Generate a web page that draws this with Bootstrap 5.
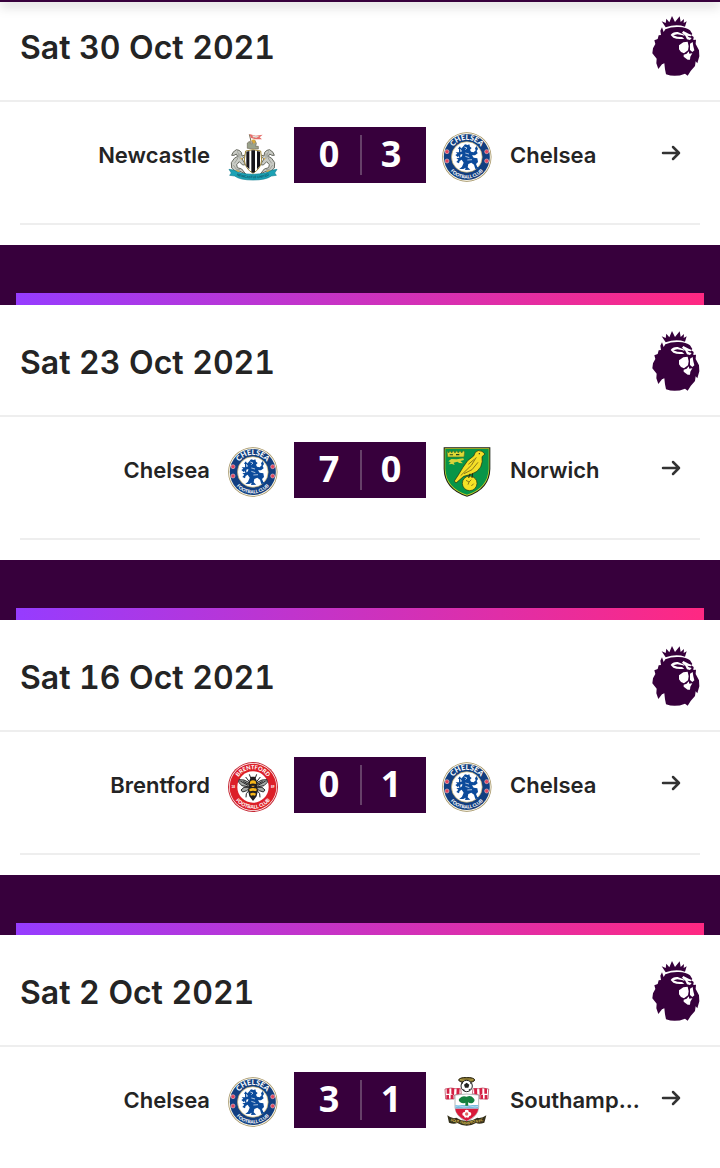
<!DOCTYPE html>
<html lang="en">
<head>
<meta charset="utf-8">
<meta name="viewport" content="width=device-width, initial-scale=1">
<title>Chelsea results, October 2021</title>
<link rel="stylesheet" href="https://cdn.jsdelivr.net/npm/bootstrap@5.3.0/dist/css/bootstrap.min.css">
<style>
:root { --plum: #37003c; --ink: #242424; --rule: #eeeeee; }
body { font-family: Inter, "Noto Sans", sans-serif; color: var(--ink); background: #fff; }
.top-strip { height: 2px; background: var(--plum); box-shadow: 0 2px 12px rgba(0,0,0,.6); }
.day-first { margin-top: -12px; }
.day-head { padding: 26px 20px 24px; border-bottom: 2px solid var(--rule); }
.day-title { font-size: 32px; line-height: 44px; font-weight: 600; font-variant-numeric: tabular-nums; }
.comp-logo { width: 48px; height: 60px; fill: var(--plum); }
.match-wrap { padding-bottom: 20px; }
.match-rule { height: 2px; margin: 0 20px; background: var(--rule); }
.fixture-grid { display: grid; grid-template-columns: minmax(0,1fr) 132px minmax(0,1fr); column-gap: 16px; align-items: center; padding: 25px 20px 40px; color: var(--ink); }
.side { gap: 18px; }
.club { font-size: 22px; line-height: 32px; font-weight: 600; }
.crest { width: 50px; height: 50px; }
.score { height: 56px; padding: 0 4px; background: var(--plum); color: #fff; font: 700 36px/54px "Noto Sans", sans-serif; position: relative; }
.score::after { content: ""; position: absolute; left: 50%; top: 8px; width: 2px; height: 40px; background: #664069; }
.go { width: 20px; height: 20px; margin-right: 19px; }
.gap-band { height: 60px; padding: 48px 16px 0; background: var(--plum); }
.glow-bar { height: 12px; background: linear-gradient(90deg, #963cff, #ff2882); }
</style>
<script defer src="https://cdn.jsdelivr.net/npm/bootstrap@5.3.0/dist/js/bootstrap.bundle.min.js"></script>
</head>
<body>
<svg class="position-absolute" width="0" height="0" aria-hidden="true">
  <defs>
    <symbol id="lion" viewBox="36 48 144 180">
      <path d="M65 64 L77 69 L79 56 L88 67 L96 48 L105 66 L119 49 L122 66 L132 57 L131 69 L140 64 L135 80 Q108 71 77 82 Z"/>
      <path fill-rule="evenodd" d="M76 88 Q94 80 116 81 Q139 82 150 91 L157 102 L154 106 L161 111 L160 120 L168 119 L167 132 L177 151 L178 169 L172 190 L167 184 L165 198 L152 213 L143 227 L135 221 Q106 233 78 223 L75 208 L73 190 L66 193 L55 207 L49 190 L50 176 L37 160 L39 145 L46 132 L43 121 L53 117 L56 106 L63 105 L61 92 L66 82 L71 96 Z
      M92 105 Q98 95 113 96 L130 103 L134 108 L128 106 L112 103 L100 106 L112 110 L126 111 L133 116 Q112 119 100 113 Z
      M130 93 L146 101 L155 105 L152 109 L142 107 L147 112 L155 114 L150 120 L141 118 L136 107 L126 98 Z
      M117 136 L130 127 L143 125 L146 139 L144 151 L132 160 L123 156 L117 148 Z
      M150 131 L158 126 L160 139 L163 151 L157 156 L150 150 Z
      M131 164 L140 161 L146 154 L148 161 L157 160 L151 170 L150 179 L143 179 L131 170 Z"/>
    </symbol>

    <symbol id="chelsea" viewBox="24 21 150 150">
      <circle cx="98.500" cy="96" r="74" fill="#9d8b59"/>
      <circle cx="98.500" cy="96" r="72" fill="#f7f3e4"/>
      <circle cx="98.500" cy="96" r="69" fill="#123f80"/>
      <circle cx="98.500" cy="96" r="46" fill="#fff" stroke="#c5ad68" stroke-width="2"/>
      <path id="che-top" fill="none" d="M47 96 A51 51 0 0 1 150 96"/>
      <path id="che-low" fill="none" d="M34 96 A64 64 0 0 0 163 96"/>
      <text font-family="Lato, sans-serif" font-weight="900" font-size="22" fill="#fff" text-anchor="middle"><textPath href="#che-top" startOffset="50%">CHELSEA</textPath></text>
      <text font-family="Lato, sans-serif" font-weight="900" font-size="14" fill="#fff" text-anchor="middle"><textPath href="#che-low" startOffset="50%">FOOTBALL CLUB</textPath></text>
      <g fill="#e2455c" stroke="#e9b9bf" stroke-width="2">
        <circle cx="39" cy="80" r="6"/><circle cx="158" cy="80" r="6"/>
        <circle cx="39" cy="108" r="6"/><circle cx="158" cy="108" r="6"/>
      </g>
      <path fill="#0b4a9b" d="M88 64 L93 58 L101 60 L106 58 L108 65 L113 69 L108 74 L111 80 L119 82 L125 76 L123 70 L128 63 L132 72 L128 78 L131 85 L123 91 L114 91 L119 98 L130 100 L132 111 L126 117 L130 126 L137 130 L124 132 L120 119 L112 113 L103 117 L101 127 L109 134 L93 135 L95 128 L88 132 L76 132 L84 125 L89 113 L83 104 L77 108 L75 115 L67 111 L73 104 L67 100 L77 98 L84 94 L85 87 L76 90 L72 97 L64 90 L70 86 L65 82 L76 82 L84 79 L80 73 Z"/>
      <path fill="none" stroke="#0b4a9b" stroke-width="4" d="M77 65 V98 M73 70 H82"/>
      <path fill="none" stroke="#fff" stroke-width="2" d="M91 66 L99 69 L94 74 M94 84 L105 87 M94 94 L106 98 M100 105 L114 104"/>
    </symbol>

    <symbol id="newcastle" viewBox="24 21 150 150">
      <path fill="none" stroke="#766e55" stroke-width="3" d="M88 28 L94 53"/>
      <path fill="#e66d69" d="M88 27 L107 32 L128 29 L119 37 L126 43 L106 43 L93 39 Z"/>
      <path fill="#dfe3dc" d="M97 31 L108 34 L118 33 L110 38 L99 37 Z"/>
      <path fill="#9aa28b" stroke="#6d6755" stroke-width="2" d="M82 70 V54 L87 50 H91 V56 H97 V48 L105 46 L109 55 L107 64 H115 V72 Z"/>
      <path fill="#d9a93b" d="M94 45 L103 43 L107 51 L101 57 Z"/>
      <g id="nuc-horse">
        <path fill="#c9cbc5" stroke="#66685f" stroke-width="3" d="M57 76 L49 74 L39 82 L35 91 L42 91 L49 87 L53 94 L43 100 L34 113 L35 129 L45 138 L60 139 L77 147 L65 132 L52 128 L50 119 L58 110 L68 120 L77 119 L66 102 L73 96 L80 98 L75 90 L66 93 L64 82 Z"/>
        <path fill="none" stroke="#888b84" stroke-width="2" d="M52 79 L57 90 L51 104 L43 115 M60 85 L60 101 M40 120 L49 133 L60 134"/>
        <path fill="#d6ae51" d="M61 99 L68 99 L65 105 Z M43 137 L56 135 L59 141 L48 144 Z"/>
      </g>
      <use href="#nuc-horse" transform="translate(198 0) scale(-1 1)"/>
      <path fill="#fff" stroke="#a08637" stroke-width="3" d="M77 78 Q98 70 122 78 L125 105 Q123 131 99 145 Q75 131 73 105 Z"/>
      <path fill="#17151c" d="M79 80 L88 78 V133 L79 124 Z M94 76 H105 V141 L99 144 L94 141 Z M111 78 L120 80 V122 L111 133 Z"/>
      <path fill="#1ba2b5" stroke="#137f91" stroke-width="2" d="M27 133 L43 136 Q58 147 99 148 Q140 147 155 136 L171 133 L164 144 L169 151 L154 153 Q138 165 99 165 Q60 165 44 153 L29 151 L34 144 Z"/>
      <path id="nuc-line" fill="none" d="M44 148 Q64 160 99 160 Q134 160 154 148"/>
      <text font-family="Lato, sans-serif" font-weight="900" font-size="10" fill="#125768" text-anchor="middle"><textPath href="#nuc-line" startOffset="50%">NEWCASTLE UNITED</textPath></text>
    </symbol>

    <symbol id="norwich" viewBox="24 21 150 150">
      <path fill="#171e12" d="M29 22 H169 V86 Q168 148 99 170 Q30 148 29 86 Z"/>
      <path fill="#c8cf2c" d="M32 25 H166 V86 Q165 145 99 167 Q33 145 32 86 Z"/>
      <path fill="#079548" d="M34 27 H164 V86 Q162 143 99 164 Q36 143 34 86 Z"/>
      <path fill="#ddd936" stroke="#55701f" stroke-width="2" d="M39 34 L44 39 L48 32 L53 39 L58 32 L63 39 L68 32 L73 39 L78 32 L83 39 L88 32 L92 36 L90 51 H41 Z"/>
      <path fill="#d8d33a" d="M43 64 L52 57 L68 58 L88 55 L90 60 L79 63 L87 70 L76 69 L70 65 L59 68 L62 75 L54 72 L44 73 L50 67 Z"/>
      <path fill="#25471d" d="M47 43 H57 V46 H47 Z M66 42 H76 V46 H66 Z"/>
      <path fill="#f4df28" stroke="#202b0b" stroke-width="2" d="M153 42 L144 34 Q132 28 124 37 L119 48 L101 62 L87 82 L73 105 L61 123 L66 129 L89 109 L111 103 Q131 97 140 81 Q147 65 144 50 Z"/>
      <path fill="none" stroke="#897719" stroke-width="3" d="M127 52 L112 76 L80 107 M132 67 L114 89 L90 101 M122 57 L103 73"/>
      <circle cx="136" cy="41" r="2" fill="#222"/>
      <circle cx="107" cy="130" r="22" fill="#f5e226" stroke="#29340e" stroke-width="2"/>
      <path fill="none" stroke="#8a7913" stroke-width="3" d="M96 121 L105 126 L112 119 M105 126 L102 134 M119 131 L112 138"/>
      <path fill="none" stroke="#242711" stroke-width="3" d="M108 101 L104 114 M116 100 L114 114"/>
    </symbol>

    <symbol id="brentford" viewBox="24 21 150 150">
      <circle cx="99" cy="96" r="75" fill="#c52632"/>
      <circle cx="99" cy="96" r="72" fill="#fff"/>
      <circle cx="99" cy="96" r="70" fill="#dc1f28"/>
      <circle cx="99" cy="96" r="47" fill="#fff"/>
      <path id="bre-top" fill="none" d="M46 96 A53 53 0 0 1 152 96"/>
      <path id="bre-low" fill="none" d="M34 96 A65 65 0 0 0 164 96"/>
      <text font-family="Lato, sans-serif" font-weight="900" font-size="17" fill="#fff" text-anchor="middle"><textPath href="#bre-top" startOffset="50%">BRENTFORD</textPath></text>
      <text font-family="Lato, sans-serif" font-weight="900" font-size="15" fill="#fff" text-anchor="middle"><textPath href="#bre-low" startOffset="50%">FOOTBALL CLUB</textPath></text>
      <g font-family="Lato, sans-serif" font-weight="900" font-size="9" fill="#fff" text-anchor="middle"><text x="40" y="100">18</text><text x="158" y="100">89</text></g>
      <g id="bee-half">
        <path fill="#a7aaa7" stroke="#29282a" stroke-width="3" d="M88 83 L72 75 L57 74 L56 82 L66 92 L88 96 Z M88 97 L72 97 L63 105 L68 111 L80 107 L90 99 Z"/>
        <path fill="none" stroke="#242225" stroke-width="3" d="M93 71 L88 58 M88 80 L77 66 M88 105 L79 116 L78 127 M61 78 L84 91 M70 79 L86 88"/>
      </g>
      <use href="#bee-half" transform="translate(198 0) scale(-1 1)"/>
      <path fill="#211f20" d="M90 72 L94 65 H104 L108 72 L113 85 L111 96 L114 106 L110 124 L99 138 L88 124 L84 106 L87 96 L85 85 Z"/>
      <path fill="#f7b719" d="M91 79 Q99 72 107 79 L109 88 Q99 83 89 88 Z M88 102 Q99 96 110 102 L109 109 Q99 105 89 109 Z M90 116 Q99 111 108 116 L105 122 Q99 119 93 122 Z"/>
      <path fill="#d48a18" d="M94 92 H104 L102 96 H96 Z"/>
    </symbol>

    <symbol id="southampton" viewBox="24 21 150 150">
      <ellipse cx="98" cy="30" rx="24" ry="8" fill="#81702e" stroke="#2d2815" stroke-width="3"/>
      <path fill="none" stroke="#c1ab4c" stroke-width="3" d="M78 29 Q98 35 118 29"/>
      <circle cx="98" cy="48" r="17" fill="#fff" stroke="#242424" stroke-width="3"/>
      <path fill="#222" d="M90 44 L98 38 L106 44 L103 53 H93 Z M82 44 L87 40 L88 34 L83 37 Z M108 35 L114 43 L109 41 Z M86 57 L93 60 L90 64 Z M103 60 L110 55 L107 62 Z"/>
      <g id="sou-scarf">
        <path fill="#fff" stroke="#a92f49" stroke-width="2" d="M80 56 L63 56 L51 54 L33 57 L35 87 H60 V76 L82 71 Z"/>
        <path fill="#d42044" d="M77 55 H68 L67 76 L76 73 Z M61 55 L52 54 L52 71 L60 76 Z M46 54 L38 56 L38 71 H46 Z M37 75 H45 V88 H37 Z M50 74 H58 V87 H50 Z"/>
      </g>
      <use href="#sou-scarf" transform="translate(197 0) scale(-1 1)"/>
      <path fill="#fff" stroke="#8f9294" stroke-width="2" d="M63 75 Q98 69 134 75 V112 Q133 138 98 155 Q64 138 63 112 Z"/>
      <path fill="#78bce0" d="M64 105 H133 V116 H64 Z"/>
      <path fill="#d91b3b" d="M64 116 H133 Q131 137 98 153 Q65 137 64 116 Z"/>
      <path fill="none" stroke="#d8edf7" stroke-width="2" d="M65 109 Q74 105 82 109 T98 109 T114 109 T132 109"/>
      <path fill="#15803f" d="M79 97 Q70 90 78 84 Q85 76 98 80 Q111 75 118 84 Q126 91 117 98 Q110 102 102 97 L103 107 H94 V98 Q86 102 79 97 Z"/>
      <path fill="#fff" d="M98 119 Q105 119 104 126 Q112 125 112 132 Q112 138 106 138 Q105 145 98 142 Q91 145 90 138 Q84 137 85 131 Q86 125 93 126 Q91 119 98 119 Z"/>
      <circle cx="98" cy="132" r="5" fill="#e16a62"/>
      <path fill="#34301b" d="M40 136 Q55 148 67 143 Q98 164 130 143 Q143 146 157 136 L151 158 Q135 164 126 159 Q98 176 70 159 Q59 164 45 158 Z"/>
      <path id="sou-line" fill="none" d="M47 151 Q64 160 75 157 Q98 170 122 157 Q136 160 150 151"/>
      <text font-family="Lato, sans-serif" font-weight="900" font-size="11" fill="#d9bd52" text-anchor="middle"><textPath href="#sou-line" startOffset="50%">SOUTHAMPTON FC</textPath></text>
    </symbol>

    <symbol id="arrow" viewBox="0 0 20 20">
      <path d="M2 10 H18 M12 4 L18 10 L12 16" fill="none" stroke="#333" stroke-width="2.500" stroke-linecap="round" stroke-linejoin="round"/>
    </symbol>
  </defs>
</svg>

<div class="top-strip sticky-top"></div>
<main>
  <section class="day-first">
    <header class="day-head d-flex align-items-center justify-content-between">
      <h2 class="day-title mb-0 mt-1">Sat 30 Oct 2021</h2>
      <svg class="comp-logo" role="img" aria-label="Premier League"><use href="#lion"/></svg>
    </header>
    <div class="match-wrap">
      <a href="#" class="fixture-grid text-decoration-none">
        <span class="side d-flex align-items-center justify-content-end"><span class="club text-truncate">Newcastle</span><svg class="crest flex-shrink-0 mt-1"><use href="#newcastle"/></svg></span>
        <span class="score d-flex text-center"><span class="w-50">0</span><span class="w-50">3</span></span>
        <span class="side d-flex align-items-center"><svg class="crest flex-shrink-0 mt-1"><use href="#chelsea"/></svg><span class="club text-truncate">Chelsea</span><svg class="go flex-shrink-0 ms-auto mb-1"><use href="#arrow"/></svg></span>
      </a>
      <div class="match-rule"></div>
    </div>
  </section>

  <div class="gap-band"><div class="glow-bar"></div></div>
  <section>
    <header class="day-head d-flex align-items-center justify-content-between">
      <h2 class="day-title mb-0 mt-1">Sat 23 Oct 2021</h2>
      <svg class="comp-logo" role="img" aria-label="Premier League"><use href="#lion"/></svg>
    </header>
    <div class="match-wrap">
      <a href="#" class="fixture-grid text-decoration-none">
        <span class="side d-flex align-items-center justify-content-end"><span class="club text-truncate">Chelsea</span><svg class="crest flex-shrink-0 mt-1"><use href="#chelsea"/></svg></span>
        <span class="score d-flex text-center"><span class="w-50">7</span><span class="w-50">0</span></span>
        <span class="side d-flex align-items-center"><svg class="crest flex-shrink-0 mt-1"><use href="#norwich"/></svg><span class="club text-truncate">Norwich</span><svg class="go flex-shrink-0 ms-auto mb-1"><use href="#arrow"/></svg></span>
      </a>
      <div class="match-rule"></div>
    </div>
  </section>

  <div class="gap-band"><div class="glow-bar"></div></div>
  <section>
    <header class="day-head d-flex align-items-center justify-content-between">
      <h2 class="day-title mb-0 mt-1">Sat 16 Oct 2021</h2>
      <svg class="comp-logo" role="img" aria-label="Premier League"><use href="#lion"/></svg>
    </header>
    <div class="match-wrap">
      <a href="#" class="fixture-grid text-decoration-none">
        <span class="side d-flex align-items-center justify-content-end"><span class="club text-truncate">Brentford</span><svg class="crest flex-shrink-0 mt-1"><use href="#brentford"/></svg></span>
        <span class="score d-flex text-center"><span class="w-50">0</span><span class="w-50">1</span></span>
        <span class="side d-flex align-items-center"><svg class="crest flex-shrink-0 mt-1"><use href="#chelsea"/></svg><span class="club text-truncate">Chelsea</span><svg class="go flex-shrink-0 ms-auto mb-1"><use href="#arrow"/></svg></span>
      </a>
      <div class="match-rule"></div>
    </div>
  </section>

  <div class="gap-band"><div class="glow-bar"></div></div>
  <section>
    <header class="day-head d-flex align-items-center justify-content-between">
      <h2 class="day-title mb-0 mt-1">Sat 2 Oct 2021</h2>
      <svg class="comp-logo" role="img" aria-label="Premier League"><use href="#lion"/></svg>
    </header>
    <a href="#" class="fixture-grid text-decoration-none">
      <span class="side d-flex align-items-center justify-content-end"><span class="club text-truncate">Chelsea</span><svg class="crest flex-shrink-0 mt-1"><use href="#chelsea"/></svg></span>
      <span class="score d-flex text-center"><span class="w-50">3</span><span class="w-50">1</span></span>
      <span class="side d-flex align-items-center"><svg class="crest flex-shrink-0 mt-1"><use href="#southampton"/></svg><span class="club">Southamp...</span><svg class="go flex-shrink-0 ms-auto mb-1"><use href="#arrow"/></svg></span>
    </a>
  </section>
</main>
</body>
</html>
